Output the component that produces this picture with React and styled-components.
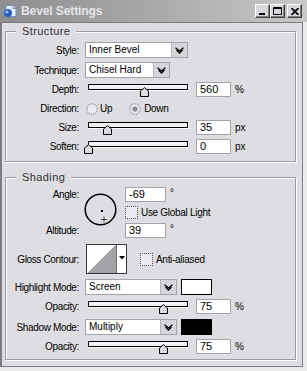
import React from 'react';
import styled, { createGlobalStyle } from 'styled-components';

const LABEL_FONT = `"Liberation Sans", Arial, sans-serif`;
const FIELD_FONT = `"Liberation Sans", Arial, sans-serif`;
const FACE = '#dedee2';

const Global = createGlobalStyle`
  html, body { margin: 0; padding: 0; background: #ececee; }
  body { width: 307px; height: 371px; overflow: hidden; }
  *, *::before, *::after { box-sizing: border-box; }
`;

const Window = styled.div`
  width: 307px;
  height: 371px;
  display: flex;
  flex-direction: column;
  background: #ececee;
`;

const TitleBar = styled.div`
  height: 22px;
  flex: none;
  display: flex;
  align-items: center;
  padding: 0 5px 0 3px;
  background: linear-gradient(90deg, #8e8e90 0%, #a6a6a8 45%, #c8c8ca 100%);
`;

const TitleText = styled.div`
  flex: 1;
  margin-left: 4px;
  font: bold 12px ${FIELD_FONT};
  letter-spacing: -0.1px;
  color: #e4e4e6;
  white-space: nowrap;
`;

const WinButton = styled.div`
  width: 15px;
  height: 14px;
  margin-left: ${p => p.$ml || 0}px;
  background: #d8d8dc;
  border: 1px solid;
  border-color: #ffffff #404040 #404040 #ffffff;
  box-shadow: inset -1px -1px 0 #808080;
  display: flex;
  align-items: center;
  justify-content: center;
`;

const Body = styled.div`
  flex: 1;
  margin: 0 4px 4px 0;
  background: ${FACE};
  border-left: 2px solid #7c7c80;
  border-top: 1px solid #7c7c80;
  border-right: 1px solid #7c7c80;
  border-bottom: 1px solid #7c7c80;
  padding: 1px 6px 0 3px;
  display: flex;
  flex-direction: column;
`;

const Group = styled.fieldset`
  margin: ${p => p.$mt}px 0 0 0;
  padding: ${p => p.$pt}px 0 ${p => p.$pb}px 0;
  border: 1px solid #9a9aa0;
  box-shadow: 1px 1px 0 #ffffff, inset 1px 1px 0 #ffffff;
  min-width: 0;
`;

const Legend = styled.legend`
  margin-left: 10px;
  padding: 0 6px;
  height: 13px;
  line-height: 13px;
  font: 11px ${FIELD_FONT};
  letter-spacing: 0.4px;
  color: #303034;
  background: ${FACE};
`;

const Row = styled.div`
  display: flex;
  align-items: center;
  height: ${p => p.$h}px;
  margin-top: ${p => p.$mt || 0}px;
`;

const Label = styled.div`
  width: 73px;
  margin-right: 6px;
  flex: none;
  text-align: right;
  font: 10px ${LABEL_FONT};
  letter-spacing: -0.35px;
  color: #000;
  white-space: nowrap;
`;

const Text = styled.span`
  font: 10px ${LABEL_FONT};
  letter-spacing: -0.3px;
  color: #000;
  white-space: nowrap;
  margin-left: ${p => p.$ml || 0}px;
`;

const Select = styled.div`
  width: ${p => p.$w}px;
  height: 16px;
  flex: none;
  display: flex;
  background: #fff;
  border: 1px solid #a4a4a8;
`;

const SelectText = styled.div`
  flex: 1;
  padding-left: 3px;
  font: 10px ${FIELD_FONT};
  line-height: 14px;
  color: #000;
  white-space: nowrap;
`;

const SelectButton = styled.div`
  width: 16px;
  flex: none;
  border-left: 1px solid #b8b8bc;
  background-color: #d6d6da;
  background-image: radial-gradient(#b4b4b8 0.6px, transparent 0.7px);
  background-size: 2px 2px;
  display: flex;
  align-items: center;
  justify-content: center;
`;

const NumBox = styled.div`
  width: ${p => p.$w}px;
  height: 15px;
  flex: none;
  margin-left: ${p => p.$ml || 0}px;
  background: #fff;
  border: 1px solid #a4a4a8;
  padding-left: 3px;
  font: 11px ${FIELD_FONT};
  line-height: 13px;
  color: #000;
`;

const Unit = styled.span`
  margin-left: ${p => p.$ml || 4}px;
  font: 10px ${LABEL_FONT};
  color: #000;
  align-self: ${p => (p.$top ? 'flex-start' : 'center')};
`;

const SliderBox = styled.div`
  position: relative;
  width: 106px;
  height: 15px;
  flex: none;
`;

const Track = styled.div`
  margin: 2px 0 0 3px;
  width: 100px;
  height: 6px;
  border: 1px solid #000;
  background: #f2f2f4;
  box-shadow: 1px 1px 0 #ffffff;
`;

const ThumbSvg = styled.svg`
  position: absolute;
  top: 5px;
  display: block;
`;

const RadioGroup = styled.div`
  display: flex;
  align-items: center;
  margin-left: 1px;
`;

const RadioItem = styled.div`
  display: flex;
  align-items: center;
  margin-left: ${p => p.$ml || 0}px;
`;

const CheckBox = styled.div`
  width: 13px;
  height: 13px;
  flex: none;
  margin-left: ${p => p.$ml || 0}px;
  border: 1px dotted #505054;
  background-color: #ececf0;
  background-image: radial-gradient(#ffffff 0.6px, transparent 0.7px);
  background-size: 2px 2px;
`;

const AngleBlock = styled.div`
  display: flex;
  height: 51px;
`;

const LabelColumn = styled.div`
  width: 73px;
  margin-right: 6px;
  flex: none;
  display: flex;
  flex-direction: column;
  justify-content: space-between;
`;

const StackLabel = styled(Label)`
  width: auto;
  margin: 0;
  height: 15px;
  line-height: 15px;
`;

const Dial = styled.div`
  width: 41px;
  flex: none;
  padding-top: 6px;
  margin-left: -1px;
`;

const RightColumn = styled.div`
  display: flex;
  flex-direction: column;
`;

const Contour = styled.div`
  display: flex;
  width: 41px;
  height: 30px;
  flex: none;
  margin-left: 1px;
  border: 1px solid #38383c;
  background: #fff;
`;

const ContourSwatch = styled.div`
  width: 30px;
  border-right: 1px solid #707074;
  background: linear-gradient(to bottom right, #ffffff 50%, #a2a2a6 50%);
`;

const ContourArrow = styled.div`
  flex: 1;
  display: flex;
  align-items: center;
  justify-content: center;
  padding-bottom: 2px;
`;

const ColorSwatch = styled.div`
  width: 31px;
  height: 16px;
  flex: none;
  margin-left: 4px;
  border: 1px solid #000;
  background: ${p => p.$color};
`;

function TitleIcon() {
  return (
    <svg width="14" height="14" viewBox="0 0 14 14">
      <path d="M3 1.5 H10 L13 4.5 V12.5 H3 Z" fill="#e8f0fa" stroke="#6f8fbf" strokeWidth="1" />
      <path d="M10 1.5 V4.5 H13" fill="#c8d8ee" stroke="#6f8fbf" strokeWidth="1" />
      <circle cx="5" cy="9" r="4" fill="#2a62c4" />
      <circle cx="4" cy="8" r="1.6" fill="#8fb6ee" />
    </svg>
  );
}

function Chevrons() {
  return (
    <svg width="9" height="7" viewBox="0 0 9 7">
      <polyline points="0.5,0.8 4.5,4 8.5,0.8" fill="none" stroke="#000" strokeWidth="1.3" />
      <polyline points="1.5,3 4.5,6 7.5,3" fill="none" stroke="#000" strokeWidth="1.3" />
    </svg>
  );
}

function Dropdown({ width, value }) {
  return (
    <Select $w={width}>
      <SelectText>{value}</SelectText>
      <SelectButton>
        <Chevrons />
      </SelectButton>
    </Select>
  );
}

function Slider({ value }) {
  return (
    <SliderBox>
      <Track />
      <ThumbSvg width="10" height="10" viewBox="0 0 10 10" style={{ left: `${3 + value - 4.5}px` }}>
        <path d="M0.5 9.5 V4 L4.5 0.6 L8.5 4 V9.5 Z" fill="#dcdce0" stroke="#000" strokeWidth="1" />
      </ThumbSvg>
    </SliderBox>
  );
}

function Radio({ checked }) {
  return (
    <svg width="12" height="12" viewBox="0 0 12 12">
      <circle cx="6" cy="6" r="5.2" fill="#ececf0" stroke="#8a8a8e" strokeWidth="1.2" strokeDasharray="1 1" />
      {checked && <circle cx="6" cy="6" r="2.6" fill="#8a8a8e" />}
    </svg>
  );
}

function SliderRow({ label, value, pos, unit, mt }) {
  return (
    <Row $h={15} $mt={mt}>
      <Label>{label}</Label>
      <Slider value={pos} />
      <NumBox $w={35} $ml={5}>{value}</NumBox>
      <Unit>{unit}</Unit>
    </Row>
  );
}

export default function App() {
  return (
    <>
      <Global />
      <Window>
        <TitleBar>
          <TitleIcon />
          <TitleText>Bevel Settings</TitleText>
          <WinButton>
            <svg width="7" height="8" viewBox="0 0 7 8"><rect x="0" y="6" width="6" height="2" fill="#000" /></svg>
          </WinButton>
          <WinButton>
            <svg width="9" height="8" viewBox="0 0 9 8"><path d="M0.5 0.5 H8.5 V7.5 H0.5 Z M0.5 1.5 H8.5" fill="none" stroke="#000" strokeWidth="1" /></svg>
          </WinButton>
          <WinButton $ml={2}>
            <svg width="8" height="7" viewBox="0 0 8 7"><path d="M0.5 0 L7.5 7 M7.5 0 L0.5 7" stroke="#000" strokeWidth="1.8" /></svg>
          </WinButton>
        </TitleBar>
        <Body>
          <Group $mt={1} $pt={4} $pb={7}>
            <Legend>Structure</Legend>
            <Row $h={16}>
              <Label>Style:</Label>
              <Dropdown width={103} value="Inner Bevel" />
            </Row>
            <Row $h={16} $mt={4}>
              <Label>Technique:</Label>
              <Dropdown width={85} value="Chisel Hard" />
            </Row>
            <SliderRow label="Depth:" value="560" pos={56} unit="%" mt={4} />
            <Row $h={13} $mt={5}>
              <Label>Direction:</Label>
              <RadioGroup>
                <RadioItem>
                  <Radio />
                  <Text $ml={2}>Up</Text>
                </RadioItem>
                <RadioItem $ml={17}>
                  <Radio checked />
                  <Text $ml={3}>Down</Text>
                </RadioItem>
              </RadioGroup>
            </Row>
            <SliderRow label="Size:" value="35" pos={19} unit="px" mt={5} />
            <SliderRow label="Soften:" value="0" pos={0} unit="px" mt={4} />
          </Group>

          <Group $mt={9} $pt={3} $pb={5}>
            <Legend>Shading</Legend>
            <AngleBlock>
              <LabelColumn>
                <StackLabel>Angle:</StackLabel>
                <StackLabel>Altitude:</StackLabel>
              </LabelColumn>
              <Dial>
                <svg width="34" height="34" viewBox="0 0 34 34">
                  <circle cx="16.5" cy="16.5" r="15.3" fill="none" stroke="#000" strokeWidth="1.5" />
                  <rect x="17" y="17" width="2" height="2" fill="#000" />
                  <path d="M17 26.5 H23 M20 23.5 V29.5" stroke="#ffffff" strokeWidth="2.2" />
                  <path d="M17 26.5 H23 M20 23.5 V29.5" stroke="#303030" strokeWidth="1" />
                </svg>
              </Dial>
              <RightColumn>
                <Row $h={15}>
                  <NumBox $w={41}>-69</NumBox>
                  <Unit $top>°</Unit>
                </Row>
                <Row $h={13} $mt={4}>
                  <CheckBox />
                  <Text $ml={3}>Use Global Light</Text>
                </Row>
                <Row $h={15} $mt={4}>
                  <NumBox $w={41}>39</NumBox>
                  <Unit $top>°</Unit>
                </Row>
              </RightColumn>
            </AngleBlock>
            <Row $h={30} $mt={6}>
              <Label>Gloss Contour:</Label>
              <Contour>
                <ContourSwatch />
                <ContourArrow>
                  <svg width="6" height="4" viewBox="0 0 6 4"><path d="M0 0 H6 L3 3.5 Z" fill="#000" /></svg>
                </ContourArrow>
              </Contour>
              <CheckBox $ml={13} />
              <Text $ml={3}>Anti-aliased</Text>
            </Row>
            <Row $h={16} $mt={5}>
              <Label>Highlight Mode:</Label>
              <Dropdown width={92} value="Screen" />
              <ColorSwatch $color="#ffffff" />
            </Row>
            <SliderRow label="Opacity:" value="75" pos={75} unit="%" mt={4} />
            <Row $h={16} $mt={5}>
              <Label>Shadow Mode:</Label>
              <Dropdown width={92} value="Multiply" />
              <ColorSwatch $color="#000000" />
            </Row>
            <SliderRow label="Opacity:" value="75" pos={75} unit="%" mt={4} />
          </Group>
        </Body>
      </Window>
    </>
  );
}
